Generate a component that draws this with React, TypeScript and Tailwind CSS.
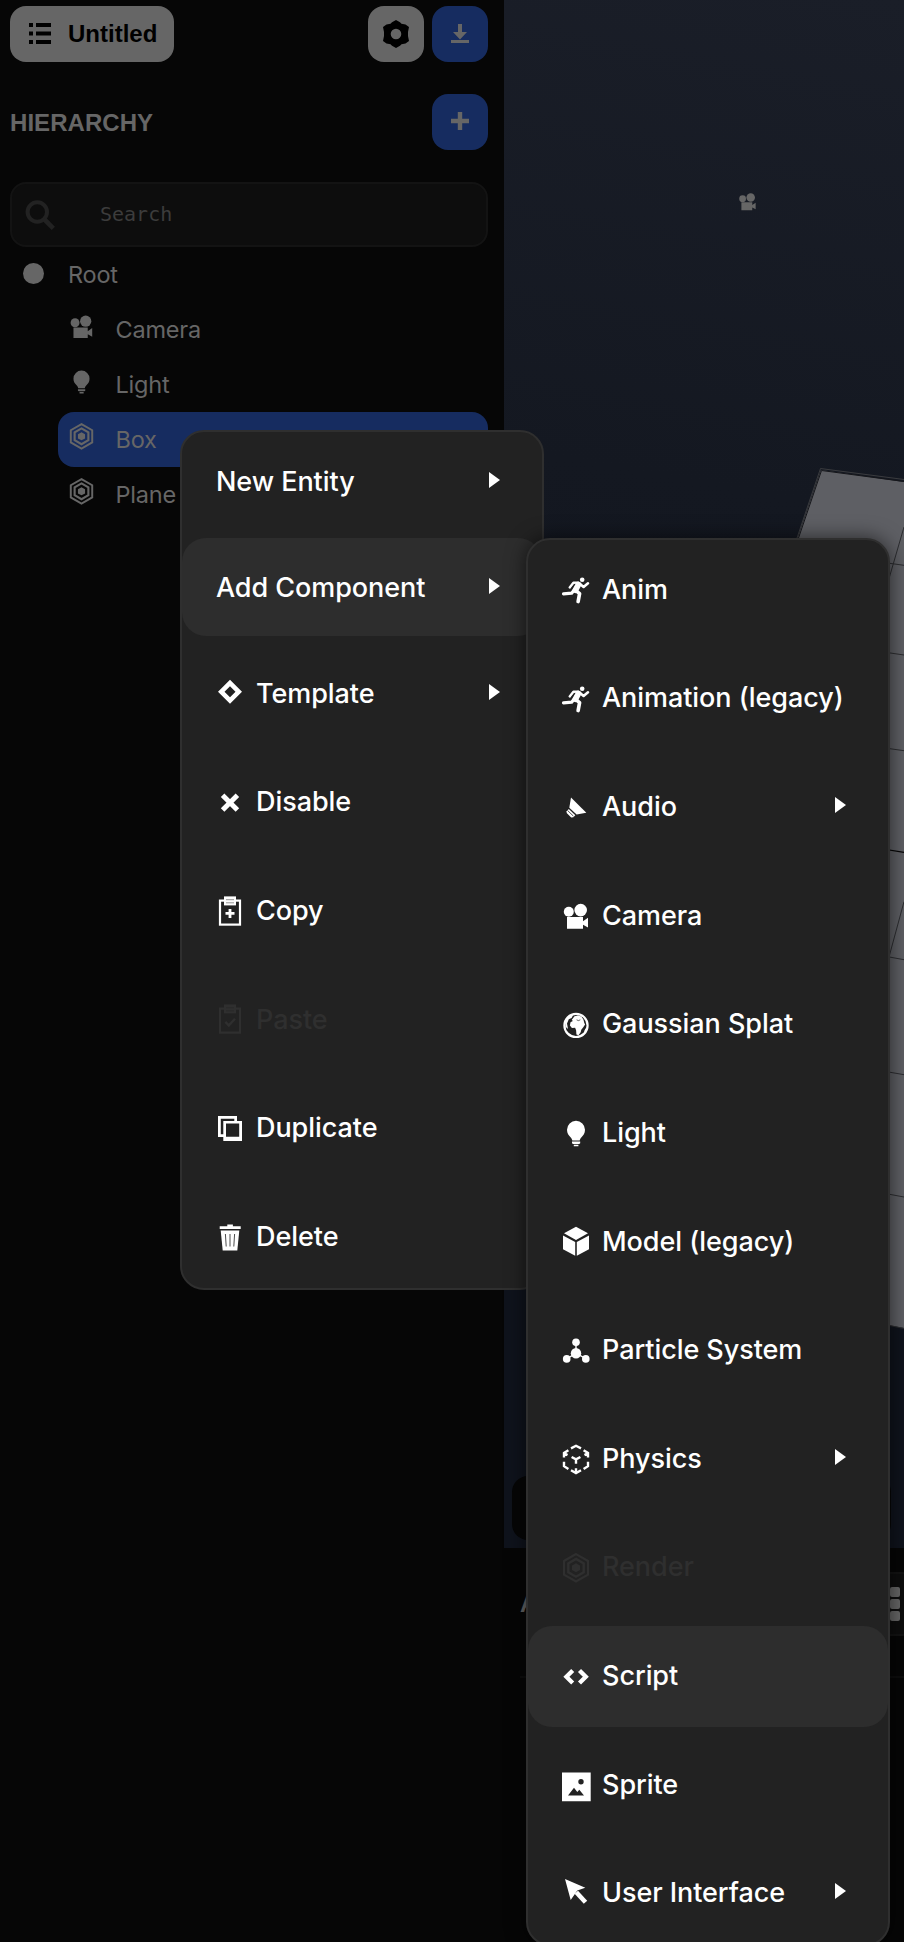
import type { ReactNode } from "react";

type IconName =
  | "template" | "close" | "copy" | "paste" | "duplicate" | "trash"
  | "run" | "audio" | "camera" | "globe" | "bulb" | "cube" | "particles"
  | "physics" | "render" | "script" | "sprite" | "pointer";

const clipboard = (
  <>
    <rect x="4" y="2.6" width="20" height="24" fill="none" stroke="currentColor" strokeWidth="2.2" />
    <rect x="8" y="-1.6" width="12" height="9" />
    <path d="M10 1.7h8M10 4.8h8" stroke="#222" strokeOpacity=".6" strokeWidth=".8" />
  </>
);

const shapes: Record<IconName, ReactNode> = {
  template: <path fillRule="evenodd" d="M14-.3 26 11.7 14 23.7 2 11.7ZM14 6.2 8.5 11.7 14 17.2 19.5 11.7Z" />,
  close: <path d="M6.6 6.3 21.4 21.1M21.4 6.3 6.6 21.1" stroke="currentColor" strokeWidth="5" />,
  copy: (
    <>
      {clipboard}
      <path d="M14 10.9v9M9.5 15.4h9" stroke="currentColor" strokeWidth="2.8" />
    </>
  ),
  paste: (
    <>
      {clipboard}
      <path d="m9.3 15.8 3.5 3.6 6.2-6.6" fill="none" stroke="currentColor" strokeWidth="2.4" />
    </>
  ),
  duplicate: (
    <>
      <path fillRule="evenodd" d="M2 1.1h19v6h-2.7V3.8H4.8v15.4H8V22H2Z" />
      <path fillRule="evenodd" d="M7.3 6.1H26v20H7.3ZM10 8.6v13.2h13.2V8.6Z" />
    </>
  ),
  trash: (
    <>
      <path d="M11.3 1.5h5.6v1.7h7.8V6H3.7V3.2h7.6Z" />
      <path d="M4.7 7.5h18.6l-2 20H6.7Z" />
      <path d="m9.4 11 .8 12.5M14 11v12.5M18.6 11l-.8 12.5" stroke="#222" strokeOpacity=".8" strokeWidth="1" />
    </>
  ),
  run: (
    <>
      <circle cx="20.2" cy="3.8" r="2.3" />
      <g fill="none" stroke="currentColor" strokeLinecap="round" strokeLinejoin="round">
        <path d="M16 6.6 11.4 6.8 7.7 11.4" strokeWidth="2.4" />
        <path d="m16.4 8.6-3 5.6" strokeWidth="5.8" />
        <path d="m18 8 3.6 2.9 4.4-3.6" strokeWidth="2.6" />
        <path d="M12.6 13.4 9.6 17.2 1.5 17.9" strokeWidth="3.2" />
        <path d="m13.6 14.4 4 3.2-1.5 8" strokeWidth="3.6" />
      </g>
      <path d="m12.4 8.6-2.6 3.2" stroke="#222" strokeWidth=".8" />
    </>
  ),
  audio: (
    <>
      <path d="M9 3.4 24.3 18.7 14.6 20.6 7.3 13.8Z" />
      <path d="M6.8 15 13.3 21.2 11.4 23.2 9.2 23.4 4.7 19V17.2Z" />
      <path d="m5.6 16.5 5.8 5.6" stroke="#222" strokeWidth=".8" />
    </>
  ),
  camera: (
    <>
      <circle cx="6.8" cy="9.8" r="5" />
      <circle cx="18.7" cy="8.1" r="6.3" />
      <path d="M5 15.1h16v4.1l5-3.4v9.6l-5-2.6v4H5Z" />
    </>
  ),
  globe: (
    <>
      <circle cx="14" cy="14.4" r="11.6" fill="none" stroke="currentColor" strokeWidth="2.2" />
      <path d="M12.5 5.2 16 4.6l3.4 1 2 2.8.9 3.6.8 1.4-2 3-1.8 2.3-.6 2.5-2.2 3-2.1-.7-.3-4.3-1-2.5-3.2.2-2-2.3.6-3.3 2.3-1.2-1-1.3Z" />
      <path d="m4 8 3.8-3.7 3.4-.3L9.6 7 6.8 8.3 5 12.6 6 18l-2.7-2.6ZM22 20.5l1.5-3 1.4-.2-1 4Z" />
      <path d="m14.6 8.8 1.8.8 1.9-.8" fill="none" stroke="#222" strokeWidth=".7" />
    </>
  ),
  bulb: (
    <>
      <path d="M14 1.8a9 9 0 0 0-9 9c0 3.6 1.8 5.6 3.5 7.4 1.1 1.2 1.6 2.2 1.8 3.4h7.4c.2-1.2.7-2.2 1.8-3.4 1.7-1.8 3.5-3.8 3.5-7.4a9 9 0 0 0-9-9Z" />
      <path d="M10 22.6h8.2v1.7l-1 .7h-6.2l-1-.7ZM11.8 25.8h4.6v1.5h-4.6Z" />
    </>
  ),
  cube: <path d="M14-1.2 26 5.3 14 11.9 2 5.3ZM1 7.4 13.200 14V27.800L1 21.300ZM27 7.400 14.800 14V27.800L27 21.300Z" />,
  particles: (
    <>
      <path d="M14 5v11M4.7 21.9 14 16.2 24.3 21.9" fill="none" stroke="currentColor" strokeWidth="1.4" />
      <circle cx="14" cy="5.2" r="3.8" />
      <circle cx="14" cy="16.2" r="5.2" />
      <circle cx="4.7" cy="21.9" r="3.8" />
      <circle cx="23.8" cy="21.9" r="3.8" />
    </>
  ),
  physics: (
    <path
      d="M9 3.4 14 .8l5 2.6M2 12.4V8l4.400-2.700M2.300 8.300l3.200 1.800M26 12.400V8l-4.400-2.700M25.700 8.300l-3.200 1.800M2 16.800v4.400L6.400 24M26 16.800v4.400L21.600 24M9 25.200l5 2.800 5-2.800M14 27.500v-4.300M9.600 12 14 14.400 18.400 12M14 14.400v4.400"
      fill="none"
      stroke="currentColor"
      strokeWidth="2.4"
    />
  ),
  render: (
    <>
      <g fill="none" stroke="currentColor" strokeWidth="2.2">
        <path d="M14 .1 26 7v13.6L14 27.5 2 20.6V7Z" />
        <path d="M14 4.9 21.7 9.4v8.8L14 22.7 6.3 18.2V9.4Z" strokeWidth="2.4" />
      </g>
      <path d="M14 9.3 18 11.5v4.600L14 18.300 10 16.100v-4.600Z" />
    </>
  ),
  script: (
    <path d="M10.7 7.4 4.4 13.7l6.300 6.300M17.500 7.400l6.300 6.300-6.300 6.300" fill="none" stroke="currentColor" strokeWidth="4.300" />
  ),
  sprite: (
    <path
      fillRule="evenodd"
      d="M0 1.6h28.7v28.7H0ZM19 8.100a2.700 2.700 0 1 0 0 5.400 2.700 2.700 0 0 0 0-5.400ZM6 24.600h16L17.300 18.800 15.300 21 12 16.800Z"
    />
  ),
  pointer: (
    <>
      <path d="M3-1 23.3 7.700 15.300 10.600 8.700 20Z" />
      <path d="m14.3 12.3 9.200 10" stroke="currentColor" strokeWidth="4.600" />
    </>
  ),
};

function Icon({ name, className }: { name: IconName; className: string }) {
  return (
    <svg viewBox="0 0 28 28" fill="currentColor" className={`shrink-0 overflow-visible ${className}`}>
      {shapes[name]}
    </svg>
  );
}

type Item = { label: string; icon?: IconName; arrow?: boolean; active?: boolean; disabled?: boolean };

const entityMenu: Item[] = [
  { label: "New Entity", arrow: true },
  { label: "Add Component", arrow: true, active: true },
  { label: "Template", icon: "template", arrow: true },
  { label: "Disable", icon: "close" },
  { label: "Copy", icon: "copy" },
  { label: "Paste", icon: "paste", disabled: true },
  { label: "Duplicate", icon: "duplicate" },
  { label: "Delete", icon: "trash" },
];

const componentMenu: Item[] = [
  { label: "Anim", icon: "run" },
  { label: "Animation (legacy)", icon: "run" },
  { label: "Audio", icon: "audio", arrow: true },
  { label: "Camera", icon: "camera" },
  { label: "Gaussian Splat", icon: "globe" },
  { label: "Light", icon: "bulb" },
  { label: "Model (legacy)", icon: "cube" },
  { label: "Particle System", icon: "particles" },
  { label: "Physics", icon: "physics", arrow: true },
  { label: "Render", icon: "render", disabled: true },
  { label: "Script", icon: "script", active: true },
  { label: "Sprite", icon: "sprite" },
  { label: "User Interface", icon: "pointer", arrow: true },
];

function MenuRow({ label, icon, arrow, active, disabled }: Item) {
  return (
    <li
      className={`flex shrink-0 items-center rounded-[24px] pr-[42px] pl-[34px] ${icon ? "h-[100.64px]" : "h-[98px]"} ${
        active ? "bg-[#2d2d2d]" : ""
      } ${disabled ? "text-[#2f2f2f]" : "text-white"}`}
    >
      {icon && <Icon name={icon} className="mr-3 size-7" />}
      <span className={`flex-1 whitespace-nowrap ${icon ? "pb-[0.5px]" : "pt-[1.5px]"}`}>{label}</span>
      {arrow && (
        <svg viewBox="0 0 11 16" fill="currentColor" className={`h-4 w-[11px] ${icon ? "mb-[5px]" : "mb-[2.6px]"}`}>
          <path d="M0 0 11 8 0 16Z" />
        </svg>
      )}
    </li>
  );
}

function Menu({ items, className }: { items: Item[]; className: string }) {
  return (
    <ul
      className={`absolute flex w-[364px] flex-col gap-2 rounded-[24px] border-2 border-[#2f2f2f] bg-[#222] text-[27px] font-medium tracking-[-0.06px] ${className}`}
    >
      {items.map((item) => (
        <MenuRow key={item.label} {...item} />
      ))}
    </ul>
  );
}

const nodes: { label: string; icon: IconName; selected?: boolean }[] = [
  { label: "Camera", icon: "camera" },
  { label: "Light", icon: "bulb" },
  { label: "Box", icon: "render", selected: true },
  { label: "Plane", icon: "render" },
];

function Hierarchy() {
  return (
    <aside className="flex w-[504px] shrink-0 flex-col pt-1.5 pr-4 pl-2.5 text-[#666]">
      <header className="flex gap-2">
        <button className="mr-auto flex h-14 w-[164px] items-center rounded-2xl bg-[#666] pl-[19px] font-['Liberation_Sans',sans-serif] text-2xl font-bold text-black">
          <svg viewBox="0 0 22 21" fill="currentColor" className="mr-[17px] mb-0.5 h-[21px] w-[22px]">
            <path d="M0 0h4v4H0ZM7 0h15.3v4H7ZM0 8.5h4v4H0ZM7 8.5h15.3v4H7ZM0 17h4v4H0ZM7 17h15.3v4H7Z" />
          </svg>
          Untitled
        </button>
        <button className="flex size-14 items-center justify-center rounded-2xl bg-[#666] text-black">
          <svg viewBox="0 0 26 28" fill="currentColor" className="h-7 w-[26px]">
            <path
              fillRule="evenodd"
              d="M13 0 17 2.2 18.5 3.7 22.5 4.6 26 7 25 12v4l1 5-3.5 2.4-4 .9L17 25.8 13 28 9 25.8 7.5 24.3l-4-.9L0 21l1-5v-4L0 7l3.5-2.4 4-.9L9 2.2ZM13 8.7a5.3 5.3 0 1 0 0 10.6 5.3 5.3 0 0 0 0-10.6Z"
            />
          </svg>
        </button>
        <button className="flex size-14 items-center justify-center rounded-2xl bg-[#162c60]">
          <svg viewBox="0 0 18 19" fill="currentColor" className="mb-0.5 h-[19px] w-[18px]">
            <path d="M7 0h4v8h5l-7 7.500L2 8h5ZM0 16h18v3H0Z" />
          </svg>
        </button>
      </header>
      <div className="mt-8 flex items-center justify-between">
        <h2 className="pt-[2px] font-['Liberation_Sans',sans-serif] text-2xl font-bold tracking-[0.05px]">HIERARCHY</h2>
        <button className="flex size-14 items-center justify-center rounded-2xl bg-[#162c60]">
          <svg viewBox="0 0 18 18" fill="currentColor" className="mb-0.5 size-[18px]">
            <path d="M6.800 0h4.400v6.800H18v4.400h-6.800V18H6.800v-6.800H0V6.800h6.800Z" />
          </svg>
        </button>
      </div>
      <div className="mt-8 flex h-[65px] shrink-0 items-center rounded-2xl border-2 border-[#131313] bg-[#0d0d0d] pl-[13px] text-[#222]">
        <svg viewBox="0 0 30 30" fill="none" stroke="currentColor" strokeWidth="4" className="size-[30px]">
          <circle cx="12.3" cy="12" r="9.7" />
          <path d="m19 19 9.3 9.3" strokeWidth="4.6" />
        </svg>
        <span className="ml-[45px] pb-px font-['DejaVu_Sans_Mono',monospace] text-[20px] text-[#3c3c3c]">Search</span>
      </div>
      <ul className="text-[23.5px] tracking-[-0.2px]">
        <li className="flex h-[55px] items-center pl-[13px]">
          <span className="mr-6 mb-[2px] size-[21px] rounded-full bg-[#666]" />
          Root
        </li>
        {nodes.map((n) => (
          <li
            key={n.label}
            className={`ml-12 flex h-[55px] items-center rounded-2xl pl-[11px] ${n.selected ? "bg-[#162c60]" : ""}`}
          >
            <Icon name={n.icon} className="mr-[21.5px] mb-[6px] size-[25px]" />
            {n.label}
          </li>
        ))}
      </ul>
    </aside>
  );
}

function Viewport() {
  return (
    <section className="relative h-[1548px] shrink-0 overflow-hidden bg-[linear-gradient(190deg,#1a1e28_0%,#141821_32%,#0f131c_75%,#0f131c_100%)]">
      <svg viewBox="504 0 400 1548" className="absolute inset-0 h-full w-full">
        <path d="M821 470 904 482V1328L700 1290 560 1230Z" fill="#5e5f64" />
        <path d="M904 479.5 820.5 468.5 797 538" fill="none" stroke="#3a3b3e" strokeWidth="1" />
        <path d="M904 481.5 821.5 470.5 798.5 538" fill="none" stroke="#15161a" strokeWidth="1" />
        <path
          d="M880 562 904 565.3M880 651.5 904 655M880 747.3 904 750.7M880 955.3 904 959.7M880 1070.5 904 1074.7M880 1192.5 904 1197M904 527 888 582M904 901.7 886 968M880 1323.5 904 1328.5"
          stroke="#2c2d30"
          strokeWidth="1"
        />
        <path d="M880 848.5 904 852.3" stroke="#050505" strokeWidth="1.2" />
      </svg>
      <Icon name="camera" className="absolute top-[192px] left-[234px] size-[19px] text-[#666]" />
      <div className="absolute top-[1476px] left-2 h-16 w-[379px] rounded-2xl bg-[#060606]" />
    </section>
  );
}

function Assets() {
  return (
    <section className="flex-1 pl-4">
      <header className="flex h-[130px] items-center justify-between overflow-hidden border-b-2 border-[#0d0d0d] pb-[16px]">
        <h2 className="font-['Liberation_Sans',sans-serif] text-2xl font-bold text-[#666]">ASSETS</h2>
        <div className="-mr-1 flex h-16 w-[60px] shrink-0 items-center justify-end rounded-md border-2 border-[#131313] bg-[#0d0d0d] pr-1.5">
          <div className="grid grid-cols-3 gap-0.5">
            {Array.from({ length: 9 }, (_, i) => (
              <span key={i} className="size-2.5 rounded-[2px] bg-[#666]" />
            ))}
          </div>
        </div>
      </header>
    </section>
  );
}

export default function App() {
  return (
    <main className="relative flex h-[1942px] w-[904px] overflow-hidden bg-[#060606] font-[Inter,sans-serif]">
      <Hierarchy />
      <div className="flex min-w-0 flex-1 flex-col">
        <Viewport />
        <Assets />
      </div>
      <Menu items={entityMenu} className="top-[430px] left-[180px]" />
      <Menu items={componentMenu} className="top-[538px] left-[526px] shadow-[0_0_20px_rgba(0,0,0,0.6)]" />
    </main>
  );
}
